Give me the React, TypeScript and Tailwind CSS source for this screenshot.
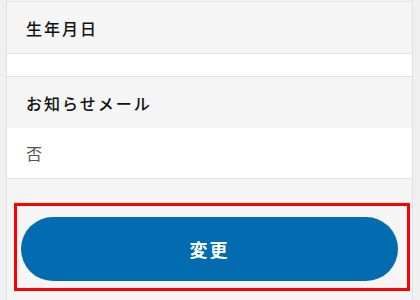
const font = "font-['Noto_Sans_CJK_JP','Noto_Sans',sans-serif]";

function SectionHeader({ label }: { label: string }) {
  return (
    <div className="flex h-[51px] items-center bg-[#f5f5f5] pl-[19px] text-[16px] font-medium tracking-[2px] text-[#111]">
      {label}
    </div>
  );
}

export default function App() {
  return (
    <div className={`h-[300px] w-[420px] overflow-hidden bg-[#f0f0f0] ${font}`}>
      <div className="ml-[6px] mr-[7px] h-full border-x border-[#e0e0e0] bg-[#f5f5f5]">
        <div className="h-[1px] bg-[#f5f5f5]" />
        <div className="border-t border-[#e2e2e2]">
          {/* 生年月日 */}
          <SectionHeader label="生年月日" />
          <div className="h-[24px] border-y border-[#e2e2e2] bg-white" />

          {/* お知らせメール */}
          <SectionHeader label="お知らせメール" />
          <div className="flex h-[51px] items-center rounded-b-[3px] border-b border-[#e2e2e2] bg-white pl-[19px] text-[16px] text-[#555]">
            否
          </div>
        </div>

        {/* Submit */}
        <div className="pt-[24px]">
          <div className="ml-[7px] mr-[2px] border-[3px] border-[#ff0000] pb-[7px] pl-[4px] pr-[9px] pt-[11px]">
            <button className="flex h-[64px] w-full items-center justify-center rounded-full bg-[#036bb0] text-[18px] font-bold tracking-[2px] text-white">
              変更
            </button>
          </div>
        </div>
      </div>
    </div>
  );
}
